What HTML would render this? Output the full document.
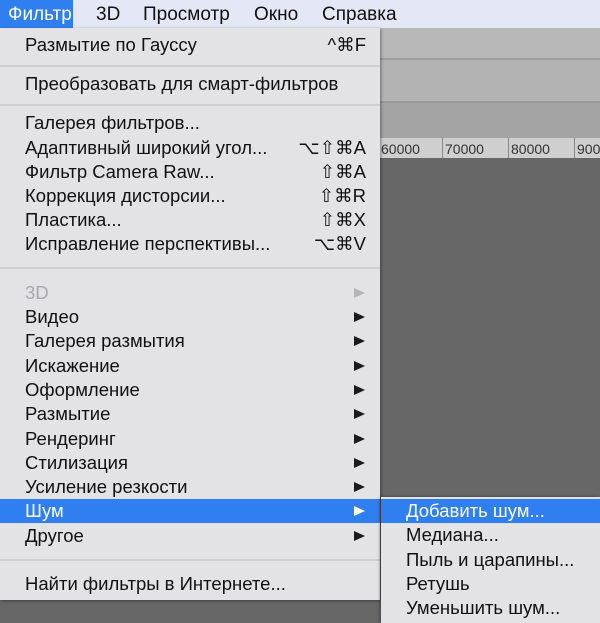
<!DOCTYPE html><html><head><meta charset="utf-8"><style>
body{margin:0;width:600px;height:623px;overflow:hidden;background:#676767;font-family:"Liberation Sans","DejaVu Sans",sans-serif;position:relative}
.a{position:absolute}
.bar{left:0;top:0;width:600px;height:28px;background:#e4e7f5;font-size:19px;color:#111}
.bar span{position:absolute;top:0;line-height:29px}
.menu{left:0;top:28px;width:380px;height:572px;background:#e3e3e6;box-shadow:1px 1px 3px rgba(0,0,0,.4)}
.r{position:absolute;left:0;width:380px;height:24px;line-height:24px;font-size:18.5px;color:#111}
.r .t{position:absolute;left:25px}
.r .k{position:absolute;right:14px}
.r .ar{position:absolute;left:354px;top:7px;width:0;height:0;border-top:5.5px solid transparent;border-bottom:5.5px solid transparent;border-left:11px solid #1a1a1a}
.sep{position:absolute;left:0;width:380px;height:2px;background:#cfcfd2}
.hl{background:#2f7ff0;color:#fff}
.hl .ar{border-left-color:#fff}
.dis{color:#a9a9ad}.dis .ar{border-left-color:#b5b5b8}
.sub{left:381px;top:497px;width:219px;height:126px;background:#e3e3e6;box-shadow:-1px 0 3px rgba(0,0,0,.4)}
.sub .r{width:219px}
</style></head><body>
<div class="a" style="left:0;top:28px;width:600px;height:30px;background:#b8b8b8"></div>
<div class="a" style="left:0;top:58px;width:600px;height:2px;background:#9c9c9c"></div>
<div class="a" style="left:0;top:60px;width:600px;height:41px;background:#b3b3b3"></div>
<div class="a" style="left:0;top:101px;width:600px;height:2px;background:#999"></div>
<div class="a" style="left:0;top:103px;width:600px;height:35px;background:#a4a4a4"></div>
<div class="a" style="left:0;top:138px;width:600px;height:20px;background:#cfcfcf;font-size:14px;color:#333">
<span class="a" style="left:381px;top:3px">60000</span>
<span class="a" style="left:442px;top:0;width:1px;height:20px;background:#888"></span><span class="a" style="left:445px;top:3px">70000</span>
<span class="a" style="left:508px;top:0;width:1px;height:20px;background:#888"></span><span class="a" style="left:511px;top:3px">80000</span>
<span class="a" style="left:574px;top:0;width:1px;height:20px;background:#888"></span><span class="a" style="left:577px;top:3px">900</span>
</div>
<div class="a bar">
<div class="a" style="left:0;top:0;width:73px;height:28px;background:#2f7ff0"></div>
<span style="left:8px;color:#fff">Фильтр</span><span style="left:96px">3D</span><span style="left:143px">Просмотр</span><span style="left:254px">Окно</span><span style="left:322px">Справка</span>
</div>
<div class="a menu">
<div class="r" style="top:5px"><span class="t">Размытие по Гауссу</span><span class="k">^⌘F</span></div>
<div class="sep" style="top:37px"></div>
<div class="r" style="top:44px"><span class="t">Преобразовать для смарт-фильтров</span></div>
<div class="sep" style="top:76px"></div>
<div class="r" style="top:83px"><span class="t">Галерея фильтров...</span></div>
<div class="r" style="top:108px"><span class="t">Адаптивный широкий угол...</span><span class="k">⌥⇧⌘A</span></div>
<div class="r" style="top:132px"><span class="t">Фильтр Camera Raw...</span><span class="k">⇧⌘A</span></div>
<div class="r" style="top:156px"><span class="t">Коррекция дисторсии...</span><span class="k">⇧⌘R</span></div>
<div class="r" style="top:180px"><span class="t">Пластика...</span><span class="k">⇧⌘X</span></div>
<div class="r" style="top:204px"><span class="t">Исправление перспективы...</span><span class="k">⌥⌘V</span></div>
<div class="sep" style="top:239px"></div>
<div class="r dis" style="top:253px"><span class="t">3D</span><span class="ar"></span></div>
<div class="r" style="top:277px"><span class="t">Видео</span><span class="ar"></span></div>
<div class="r" style="top:301px"><span class="t">Галерея размытия</span><span class="ar"></span></div>
<div class="r" style="top:326px"><span class="t">Искажение</span><span class="ar"></span></div>
<div class="r" style="top:350px"><span class="t">Оформление</span><span class="ar"></span></div>
<div class="r" style="top:374px"><span class="t">Размытие</span><span class="ar"></span></div>
<div class="r" style="top:399px"><span class="t">Рендеринг</span><span class="ar"></span></div>
<div class="r" style="top:423px"><span class="t">Стилизация</span><span class="ar"></span></div>
<div class="r" style="top:447px"><span class="t">Усиление резкости</span><span class="ar"></span></div>
<div class="r hl" style="top:471px"><span class="t">Шум</span><span class="ar"></span></div>
<div class="r" style="top:496px"><span class="t">Другое</span><span class="ar"></span></div>
<div class="sep" style="top:531px"></div>
<div class="r" style="top:544px"><span class="t">Найти фильтры в Интернете...</span></div>
</div>
<div class="a sub">
<div class="r hl" style="top:2px"><span class="t">Добавить шум...</span></div>
<div class="r" style="top:26px"><span class="t">Медиана...</span></div>
<div class="r" style="top:51px"><span class="t">Пыль и царапины...</span></div>
<div class="r" style="top:75px"><span class="t">Ретушь</span></div>
<div class="r" style="top:99px"><span class="t">Уменьшить шум...</span></div>
</div>
</body></html>
